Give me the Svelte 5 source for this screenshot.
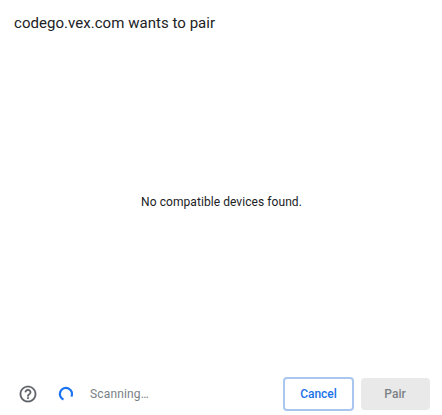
<script>
  let { origin = 'codego.vex.com', devices = [], scanning = true } = $props();
</script>

<div class="chooser" role="dialog" aria-labelledby="title">
  <h1 id="title">{origin} wants to pair</h1>

  <div class="devices">
    {#if devices.length}
      {#each devices as device}
        <div class="device">{device}</div>
      {/each}
    {:else}
      <p>No compatible devices found.</p>
    {/if}
  </div>

  <footer>
    <button class="help" aria-label="Help">
      <svg width="20" height="20" viewBox="0 0 24 24" fill="#5f6368" stroke="#5f6368" stroke-width="0.2">
        <path d="M11 18h2v-2h-2v2zm1-16C6.48 2 2 6.48 2 12s4.48 10 10 10 10-4.48 10-10S17.52 2 12 2zm0 18c-4.41 0-8-3.59-8-8s3.59-8 8-8 8 3.59 8 8-3.59 8-8 8zm0-14c-2.21 0-4 1.79-4 4h2c0-1.1.9-2 2-2s2 .9 2 2c0 2-3 1.75-3 5h2c0-2.25 3-2.5 3-5 0-2.21-1.79-4-4-4z" />
      </svg>
    </button>
    {#if scanning}
      <svg class="throbber" width="16" height="16" viewBox="0 0 16 16" fill="none">
        <path d="M5.5 13.6A6.1 6.1 0 1 1 13.5 10.6" stroke="#1a73f0" stroke-width="2.2" />
      </svg>
      <span class="status">Scanning…</span>
    {/if}
    <div class="actions">
      <button class="btn cancel">Cancel</button>
      <button class="btn pair" disabled>Pair</button>
    </div>
  </footer>
</div>

<style>
  .chooser {
    box-sizing: border-box;
    height: 100vh;
    display: flex;
    flex-direction: column;
    padding: 13px 12px 4px 14px;
    background: #fff;
    color: #202124;
    font-family: Roboto, sans-serif;
    font-size: 12px;
  }
  h1 {
    margin: 0;
    font-size: 15px;
    line-height: 20px;
    font-weight: 400;
    letter-spacing: 0.04px;
  }
  .devices {
    flex: 1;
    display: flex;
    flex-direction: column;
    align-items: center;
    justify-content: center;
    padding: 0 1px 6px 0;
  }
  .devices p {
    margin: 0;
    line-height: 16px;
    letter-spacing: 0.07px;
  }
  footer {
    display: flex;
    align-items: center;
    height: 34px;
  }
  .help {
    display: flex;
    margin: 0 20px 0 4px;
    padding: 0;
    border: 0;
    background: none;
  }
  .status {
    margin-left: 16px;
    color: #7a7f85;
    letter-spacing: 0.15px;
  }
  .actions {
    display: flex;
    align-items: center;
    gap: 7px;
    margin-left: auto;
  }
  .btn {
    box-sizing: border-box;
    padding: 0;
    border-radius: 4px;
    font: 500 12px Roboto, sans-serif;
  }
  .cancel {
    width: 71px;
    height: 34px;
    border: 2px solid #a9c7ee;
    background: #fff;
    color: #1a73e8;
  }
  .pair {
    width: 69px;
    height: 32px;
    padding-right: 1px;
    border: 0;
    background: #e9e9e9;
    color: #7d8186;
  }
</style>
